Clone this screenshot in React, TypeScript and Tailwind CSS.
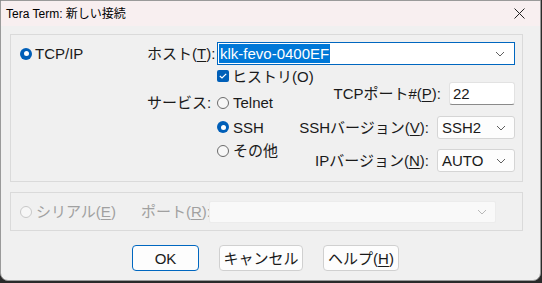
import React from "react";

const FONT = { fontFamily: '"Liberation Sans", "Noto Sans CJK JP", sans-serif' };

function Chevron({ color = "#606060" }: { color?: string }) {
  return (
    <svg width="10" height="6" viewBox="0 0 10 6" className="shrink-0">
      <path d="M1 1 L5 5 L9 1" fill="none" stroke={color} strokeWidth="1" />
    </svg>
  );
}

function Radio({ checked, disabled }: { checked?: boolean; disabled?: boolean }) {
  if (checked) {
    return (
      <span className="w-[12px] h-[12px] rounded-full bg-[#005fb8] flex items-center justify-center shrink-0">
        <span className="w-[5px] h-[5px] rounded-full bg-white" />
      </span>
    );
  }
  return (
    <span
      className={
        "w-[12px] h-[12px] rounded-full border shrink-0 bg-[#f7f7f7] " +
        (disabled ? "border-[#c8c8c8]" : "border-[#6b6b6b]")
      }
    />
  );
}

function U({ children }: { children: React.ReactNode }) {
  return <span className="underline underline-offset-2 decoration-1">{children}</span>;
}

export default function App() {
  return (
    <div className="w-[542px] h-[283px] bg-[#2a2a2a] overflow-hidden whitespace-nowrap" style={FONT}>
      <div className="w-[541px] h-[281px] bg-[#f0f0f0] border border-[#9a9a9a] rounded-b-[8px] flex flex-col text-[15px] text-[#1a1a1a] leading-none">
        {/* Title bar */}
        <div className="h-[25px] bg-[#f8eff0] flex items-center justify-between pl-[5px] pr-[15px] shrink-0">
          <span className="text-[12px] text-black">Tera Term: 新しい接続</span>
          <svg width="11" height="11" viewBox="0 0 11 11">
            <path d="M0.5 0.5 L10.5 10.5 M10.5 0.5 L0.5 10.5" stroke="#222" strokeWidth="1" />
          </svg>
        </div>

        {/* Group 1 */}
        <div className="ml-[9px] mt-[8px] w-[513px] h-[148px] border border-[#dadada] flex flex-col shrink-0">
          {/* Row 1 */}
          <div className="flex items-start mt-[7px] h-[23px]">
            <div className="w-[136px] flex items-center h-[23px] pl-[9px] gap-[3px]">
              <Radio checked />
              <span>TCP/IP</span>
            </div>
            <div className="w-[70px] h-[23px] flex items-center">
              ホスト(<U>T</U>):
            </div>
            <div className="w-[298px] h-[23px] border border-[#0067c0] bg-white flex items-center pl-[1px] pr-[9px] justify-between">
              <span className="bg-[#0078d7] text-white h-[19px] flex items-center px-[1px]">klk-fevo-0400EF</span>
              <Chevron />
            </div>
          </div>
          {/* Checkbox */}
          <div className="flex items-center ml-[206px] mt-[5px] h-[12px] gap-[3px]">
            <span className="w-[12px] h-[12px] rounded-[2px] bg-[#005fb8] flex items-center justify-center shrink-0">
              <svg width="8" height="6" viewBox="0 0 8 6">
                <path d="M0.8 3 L3 5 L7.2 0.8" fill="none" stroke="#fff" strokeWidth="1.2" />
              </svg>
            </span>
            <span>ヒストリ(O)</span>
          </div>
          {/* Lower section */}
          <div className="flex">
            <div className="w-[136px]" />
            <div className="w-[70px] mt-[8px] h-[25px] flex items-center">サービス:</div>
            <div className="flex flex-col mt-[8px]">
              <div className="h-[25px] flex items-center gap-[4px]">
                <Radio />
                <span>Telnet</span>
              </div>
              <div className="h-[24px] flex items-center gap-[4px]">
                <Radio checked />
                <span>SSH</span>
              </div>
              <div className="h-[23px] flex items-center gap-[4px]">
                <Radio />
                <span>その他</span>
              </div>
            </div>
            <div className="flex-1 flex flex-col items-end pr-[7px] mt-[0px]">
              <div className="flex items-center h-[23px]">
                <span className="mr-[8px]">TCPポート#(<U>P</U>):</span>
                <div className="w-[66px] h-[23px] bg-white border border-[#e2e2e2] border-b-[#8a8a8a] rounded-[3px] flex items-center pl-[3px]">
                  22
                </div>
              </div>
              <div className="flex items-center h-[23px] mt-[11px]">
                <span className="mr-[8px]">SSHバージョン(<U>V</U>):</span>
                <div className="w-[78px] h-[23px] bg-[#fdfdfd] border border-[#d5d5d5] rounded-[3px] flex items-center justify-between pl-[4px] pr-[8px]">
                  <span>SSH2</span>
                  <Chevron />
                </div>
              </div>
              <div className="flex items-center h-[23px] mt-[10px]">
                <span className="mr-[8px]">IPバージョン(<U>N</U>):</span>
                <div className="w-[78px] h-[23px] bg-[#fdfdfd] border border-[#d5d5d5] rounded-[3px] flex items-center justify-between pl-[4px] pr-[8px]">
                  <span>AUTO</span>
                  <Chevron />
                </div>
              </div>
            </div>
          </div>
        </div>

        {/* Group 2 */}
        <div className="ml-[9px] mt-[10px] w-[513px] h-[39px] border border-[#dadada] flex items-center text-[#a0a0a0] shrink-0">
          <div className="w-[130px] flex items-center pl-[9px] gap-[4px]">
            <Radio disabled />
            <span>シリアル(<U>E</U>)</span>
          </div>
          <div className="w-[68px] whitespace-nowrap">
            ポート(<U>R</U>):
          </div>
          <div className="w-[287px] h-[22px] bg-[#f9f9f9] border border-[#ececec] rounded-[2px] flex items-center justify-end pr-[8px]">
            <Chevron color="#b8b8b8" />
          </div>
        </div>

        {/* Buttons */}
        <div className="flex mt-[14px] ml-[131px] gap-[20px]">
          <button className="w-[67px] h-[26px] bg-[#fdfdfd] border border-[#0067c0] rounded-[4px] flex items-center justify-center text-[15px] text-[#1a1a1a]">
            OK
          </button>
          <button className="w-[84px] h-[26px] bg-[#fdfdfd] border border-[#d0d0d0] rounded-[4px] flex items-center justify-center text-[15px] text-[#1a1a1a]">
            キャンセル
          </button>
          <button className="w-[76px] h-[26px] bg-[#fdfdfd] border border-[#d0d0d0] rounded-[4px] flex items-center justify-center text-[15px] text-[#1a1a1a]">
            ヘルプ(<U>H</U>)
          </button>
        </div>
      </div>
    </div>
  );
}
